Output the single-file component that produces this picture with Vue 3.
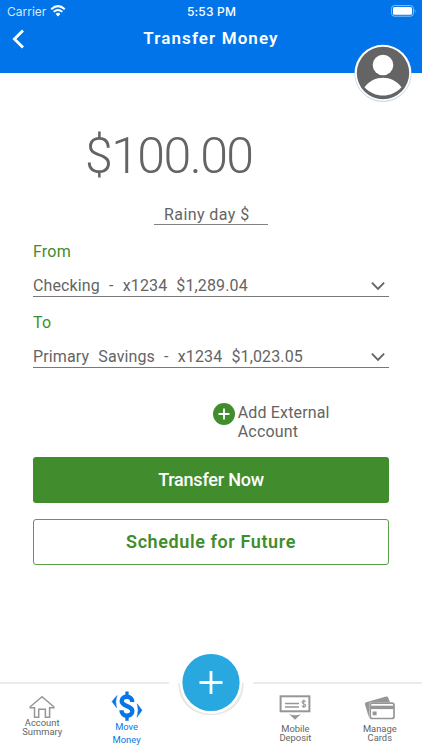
<script setup>
const accounts = [
  { label: 'From', value: 'Checking  -  x1234  $1,289.04', kind: 'from' },
  { label: 'To', value: 'Primary  Savings  -  x1234  $1,023.05', kind: 'to' },
]
</script>

<template>
  <div class="screen">
    <header class="header">
      <div class="status">
        <div class="carrier">
          <span class="carrier-name">Carrier</span>
          <svg width="16" height="12" viewBox="0 0 16 12">
            <path d="M1.2 4.2Q8-2 14.8 4.2" fill="none" stroke="#fff" stroke-width="2" />
            <path d="M3.6 6.9Q8 2.9 12.4 6.9" fill="none" stroke="#fff" stroke-width="1.9" />
            <path d="M5.6 8.9Q8 6.8 10.4 8.9L8 11.4Z" fill="#fff" />
          </svg>
        </div>
        <span class="clock">5:53 PM</span>
        <svg class="battery" width="26" height="12" viewBox="0 0 26 12">
          <rect x=".6" y=".6" width="21.8" height="10.6" rx="2.8" fill="none" stroke="#8fc0f5" />
          <rect x="2" y="2" width="19" height="7.8" rx="1.6" fill="#fff" />
          <path d="M23.7 4Q25.4 6 23.7 8Z" fill="#8fc0f5" />
        </svg>
      </div>
      <div class="titlebar">
        <svg class="back" width="14" height="20" viewBox="0 0 14 20">
          <path d="M11 1.4L2.4 10L11 18.4" fill="none" stroke="#fff" stroke-width="2.8" />
        </svg>
        <h1 class="title">Transfer Money</h1>
      </div>
      <svg class="avatar" width="60" height="60" viewBox="0 0 60 60">
        <circle cx="30" cy="30.4" r="28.6" fill="#c3d6f0" />
        <circle cx="30" cy="30" r="28" fill="#fff" />
        <circle cx="30" cy="30" r="26.2" fill="#646464" />
        <circle cx="30" cy="22" r="10.3" fill="#fff" />
        <path d="M11.5 44.2C21 31.6 39 31.6 48.5 44.2C38 55.4 22 55.4 11.5 44.2Z" fill="#fff" />
      </svg>
    </header>

    <main class="content">
      <div class="amount">$100.00</div>
      <div class="memo">Rainy day $</div>
      <section v-for="a in accounts" :key="a.kind" class="field">
        <div class="label">{{ a.label }}</div>
        <div class="select">
          <span class="value" :class="a.kind">{{ a.value }}</span>
          <svg width="16" height="10" viewBox="0 0 16 10">
            <path d="M1.9 1.7L8 7.8L14.1 1.7" fill="none" stroke="#646464" stroke-width="1.9" />
          </svg>
        </div>
      </section>
      <div class="external">
        <svg width="22" height="22" viewBox="0 0 22 22">
          <circle cx="11" cy="11" r="11" fill="#418d2d" />
          <path d="M11 5.5V16.5M5.5 11H16.5" stroke="#fff" stroke-width="1.8" />
        </svg>
        <div class="external-text">Add External<br>Account</div>
      </div>
      <button class="btn primary"><span>Transfer Now</span></button>
      <button class="btn outline"><span>Schedule for Future</span></button>
    </main>

    <nav class="tabs">
      <div class="tab home">
        <svg width="28" height="24" viewBox="0 0 28 24">
          <path d="M14 1.8L2.2 11.8V12.8H6.5V22.3H10.7V14.2H17.4V22.3H21.6V12.8H25.8V11.8Z" fill="none" stroke="#969696" stroke-width="1.5" />
        </svg>
        <span>Account<br>Summary</span>
      </div>
      <div class="tab move">
        <svg width="32" height="32" viewBox="0 0 32 32">
          <path d="M16 .5V5M16 25V29.8" stroke="#0875e6" stroke-width="3.3" />
          <path d="M21.3 10.9C21.3 4.1 10.7 4.1 10.7 10.1C10.7 16 21.3 14.2 21.3 20C21.3 26.4 10.5 26.4 10.5 19.2" fill="none" stroke="#0875e6" stroke-width="4.4" />
          <path d="M6 4.5L1 10.6L5.6 16.8Q3.8 10.6 6 4.5ZM26.2 12.8L31 19.3L26 26.2Q28.2 19.3 26.2 12.8Z" fill="#0875e6" stroke="#0875e6" stroke-width=".5" />
        </svg>
        <span>Move<br>Money</span>
      </div>
      <div class="tab center">
        <svg class="fab" width="84" height="74" viewBox="0 0 84 74">
          <path d="M9.3 36C9.3 79 74.7 79 74.7 36" fill="#e6e6e6" />
          <circle cx="42" cy="35.6" r="31.2" fill="#fff" />
          <circle cx="42" cy="35.5" r="28.6" fill="#29a8df" />
          <path d="M42 24V47M30.5 35.5H53.5" stroke="#fff" stroke-width="2.8" />
        </svg>
      </div>
      <div class="tab deposit">
        <svg width="32" height="26" viewBox="0 0 32 26">
          <rect x="1.6" y="1.3" width="28.8" height="15" fill="none" stroke="#969696" stroke-width="2" />
          <path d="M6 8.5H20M6 12H20" stroke="#969696" stroke-width="1.6" />
          <path d="M24.8 4.5V13M26.6 6.8C25.9 5.3 23.1 5.5 23.1 7.2C23.1 9 26.6 8.3 26.6 10.4C26.6 12.4 23.5 12.4 23 10.6" fill="none" stroke="#969696" stroke-width="1.1" />
          <path d="M10 19.1Q16 21.6 22 19.1L16 24.8Z" fill="#969696" />
        </svg>
        <span>Mobile<br>Deposit</span>
      </div>
      <div class="tab cards">
        <svg width="32" height="26" viewBox="0 0 32 26">
          <path d="M4.8 22.2L1 9.4Q.6 7.7 2.2 7.2L22 1.6Q23.5 1.2 24.2 2.6L26 7.2H7Q5.2 7.2 5.2 9Z" fill="#969696" />
          <rect x="6.2" y="8.2" width="23.8" height="15.3" rx="2" fill="#fff" stroke="#969696" stroke-width="1.7" />
          <rect x="6" y="10.7" width="24" height="3.4" fill="#969696" />
          <rect x="8.6" y="16.5" width="4" height="3.8" fill="#969696" />
        </svg>
        <span>Manage<br>Cards</span>
      </div>
    </nav>
  </div>
</template>

<style>
body { background: #fff; }
</style>

<style scoped>
* { box-sizing: border-box; }
.screen {
  width: 422px;
  height: 750px;
  display: flex;
  flex-direction: column;
  overflow: hidden;
  background: #fff;
  color: #646464;
  font-family: Roboto, "Liberation Sans", sans-serif;
}
svg { display: block; flex: none; }
.header {
  position: relative;
  height: 73px;
  background: #0074e8;
  color: #fff;
}
.status {
  height: 22px;
  display: grid;
  grid-template-columns: 1fr auto 1fr;
  align-items: center;
  padding: 0 5px 0 7px;
  font-family: Inter, sans-serif;
  font-size: 12px;
}
.carrier { display: flex; align-items: center; gap: 4px; }
.carrier-name { color: #d5e8fc; }
.clock { font-weight: 500; letter-spacing: 0.2px; margin-left: -1px; }
.battery { justify-self: end; }
.titlebar {
  display: grid;
  grid-template-columns: 30px 1fr 40px;
  padding: 6px 0 0 10px;
}
.back { margin: 1px 0 0 2px; }
.title {
  margin: 0;
  text-align: center;
  font-size: 17px;
  line-height: 20px;
  font-weight: 600;
  letter-spacing: 1.1px;
}
.avatar { position: absolute; right: 9px; top: 43px; }
.content {
  height: 609px;
  padding: 53px 33px 0;
  display: flex;
  flex-direction: column;
}
.amount {
  margin-left: 52px;
  font-size: 50px;
  line-height: 60px;
  font-weight: 300;
  letter-spacing: -1.55px;
}
.memo {
  margin: 19px 0 0 121px;
  width: 114px;
  height: 20px;
  padding-left: 10px;
  border-bottom: 1px solid #828282;
  font-size: 16px;
  line-height: 20px;
  letter-spacing: 0.42px;
}
.field { height: 71.3px; padding-top: 17px; }
.label { color: #418d2d; font-size: 16px; line-height: 20px; letter-spacing: 0.2px; }
.select {
  height: 35px;
  padding: 13.5px 3px 0 0;
  display: flex;
  justify-content: space-between;
  border-bottom: 1.3px solid #787878;
}
.select svg { margin-top: 5px; }
.value { white-space: pre; font-size: 16px; line-height: 20px; letter-spacing: 0.13px; word-spacing: 0.45px; }
.external {
  margin: 35px 0 0 180.4px;
  display: flex;
  gap: 2.4px;
  height: 54.5px;
}
.external-text { font-size: 16px; line-height: 19.4px; letter-spacing: 0.15px; }
.btn {
  width: 356px;
  height: 46px;
  flex: none;
  border-radius: 3px;
  padding: 0;
  font-family: inherit;
  font-size: 18px;
  line-height: 44px;
}
.primary { background: #418d2d; color: #fff; border: 0; font-weight: 500; letter-spacing: -0.22px; }
.outline {
  margin-top: 16px;
  background: #fff;
  color: #418d2d;
  border: 1px solid #5b9d4a;
  font-weight: 600;
  letter-spacing: 0.6px;
}
.tabs {
  height: 68px;
  display: grid;
  grid-template-columns: repeat(5, 1fr);
  background: linear-gradient(to right, #ebebeb 169px, transparent 169px 253px, #ebebeb 253px) top / 100% 2px no-repeat;
}
.tab {
  display: flex;
  flex-direction: column;
  align-items: center;
  text-align: center;
  font-size: 9.4px;
  line-height: 9.4px;
}
.home { padding-top: 13px; }
.home span { margin-top: -1.4px; }
.move { padding-top: 8.5px; color: #0875e6; line-height: 12.3px; }
.move span { margin-top: -1.2px; }
.center { position: relative; }
.fab { position: absolute; top: -35px; }
.deposit, .cards { padding-top: 13px; }
.deposit span, .cards span { margin-top: 3px; }
</style>
